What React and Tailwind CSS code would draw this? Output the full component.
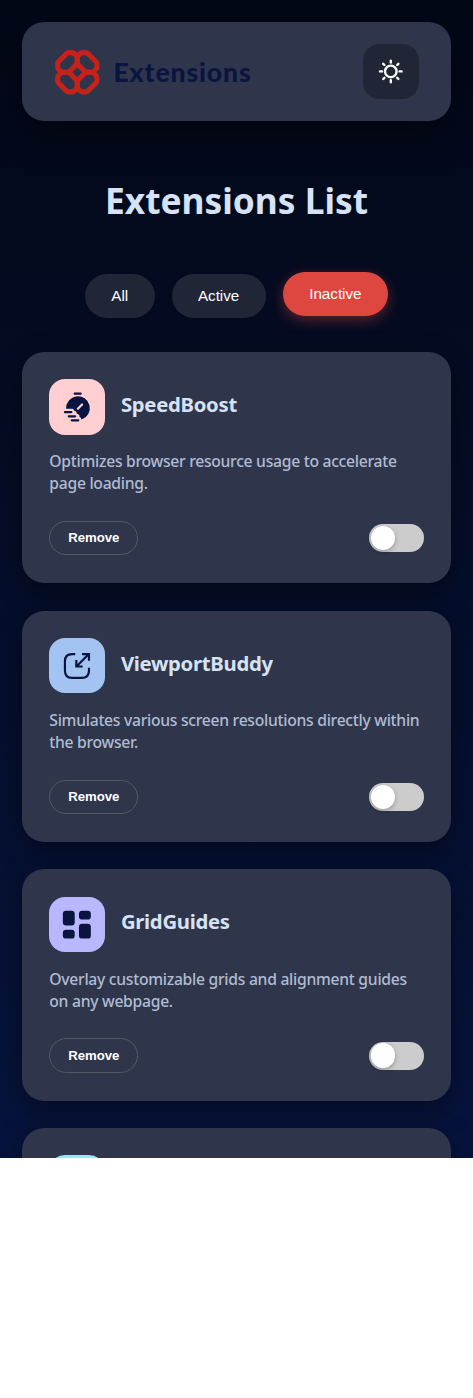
import React from "react";

function Logo() {
  const petal = "M13.6 2.6h3.2c1 0 1.6.3 2.3 1l1.9 1.9c.7.7 1 1.2 1 2.2V13.6L13.6 22H7.7c-1 0-1.5-.3-2.2-1l-1.9-1.9c-.7-.7-1-1.3-1-2.3v-3.2c0-1 .3-1.6 1-2.3l7.7-7.7c.7-.7 1.3-1 2.3-1z";
  return (
    <svg className="mt-px h-[44.5px] w-[44.5px] shrink-0 overflow-visible" viewBox="0 0 44 44" fill="none" stroke="#c7221a" strokeWidth="5" strokeLinejoin="round">
      <path d={petal} />
      <path d={petal} transform="rotate(90 22 22)" />
      <path d={petal} transform="rotate(180 22 22)" />
      <path d={petal} transform="rotate(270 22 22)" />
    </svg>
  );
}

function Sun() {
  return (
    <svg className="size-[26px]" viewBox="0 0 26 26" fill="none" stroke="#fbfdfe" strokeWidth="2.4" strokeLinecap="round">
      <circle cx="12.8" cy="12.4" r="5.8" />
      <path d="M12.8 1.6v2M12.8 21.2v2M2 12.4h2M21.6 12.4h2M5.2 4.8l1.2 1.2M19.2 18.8l1.2 1.2M5.2 20l1.2-1.2M19.2 6l1.2-1.2" />
    </svg>
  );
}

function SpeedIcon() {
  return (
    <svg className="size-full" viewBox="0 0 56 56" fill="none" strokeLinecap="round">
      <path fill="#091540" d="M17.3 30.2A12 12 0 1 1 33 40.9c-.6-.8-.9-2.4-2.2-2.8.2-1.6-.8-2.7-2.6-2.9-.1-2.2-1.3-3-2.8-3.2-.2-1.3-1.2-1.8-2.5-1.8z" />
      <path stroke="#091540" strokeWidth="2.3" d="M26 14.8h6M16.2 33.6h6.4M20 37.7h6.4M23 41.8h6.6" />
      <path stroke="#ffcfd2" strokeWidth="2.2" d="m29.2 30 4.2-4.2" />
    </svg>
  );
}

function ViewportIcon() {
  return (
    <svg className="size-full" viewBox="0 0 56 56" fill="none" stroke="#091540" strokeWidth="2.2">
      <path d="M26.5 16.3h-3.2c-4.6 0-7.2 2.6-7.2 7.2v9.7c0 4.6 2.6 7.2 7.2 7.2h9.9c4.6 0 7.2-2.6 7.2-7.2V30" />
      <path d="M27.6 22.3v6.5H34M28 28.5l12-12M33.4 16.3h7V23" />
    </svg>
  );
}

function GridIcon() {
  return (
    <svg className="size-full" viewBox="0 0 56 56" fill="#091540">
      <rect x="14" y="13.8" width="12" height="14.9" rx="3.2" />
      <rect x="30.3" y="13.8" width="12" height="9" rx="3.2" />
      <rect x="14" y="33" width="12" height="9" rx="3.2" />
      <rect x="30.3" y="27.1" width="12" height="14.9" rx="3.2" />
    </svg>
  );
}

const extensions = [
  { name: "SpeedBoost", text: "Optimizes browser resource usage to accelerate page loading.", tile: "bg-[#ffcfd2]", Icon: SpeedIcon },
  { name: "ViewportBuddy", text: "Simulates various screen resolutions directly within the browser.", tile: "bg-[#a3c4f3]", Icon: ViewportIcon },
  { name: "GridGuides", text: "Overlay customizable grids and alignment guides on any webpage.", tile: "bg-[#b9b8ff]", Icon: GridIcon },
];

const cardClass = "w-full shrink-0 rounded-[22.2px] bg-[#2f364b] px-[27.3px] pt-[27.4px] shadow-[0_9px_28px_rgba(0,0,0,0.4)]";

function Card({ item }) {
  const { Icon } = item;
  return (
    <article className={cardClass + " h-[231.4px]"}>
      <div className="flex items-center gap-[16.2px]">
        <div className={"size-[55.4px] shrink-0 overflow-hidden rounded-[16px] " + item.tile}>
          <Icon />
        </div>
        <h2 className="pb-[6px] text-[20.3px] leading-7 font-bold tracking-[-0.28px] text-[#d6e2f5]">{item.name}</h2>
      </div>
      <p className="mt-[15.4px] text-[15.7px] leading-[22.15px] font-medium tracking-[-0.28px] text-[#afbbd2]">{item.text}</p>
      <div className="mt-[26.5px] flex items-center justify-between">
        <button className="h-[34.5px] w-[89px] rounded-full border border-[#535868] font-['Liberation_Sans',Arial,sans-serif] text-[13.2px] font-bold text-white">Remove</button>
        <button aria-label={item.name} className="flex h-[28px] w-[55px] items-center rounded-full bg-[#ccc] pl-[2.4px]">
          <span className="size-[24.4px] rounded-full bg-white shadow-[0_2px_5px_rgba(0,0,0,0.25)]" />
        </button>
      </div>
    </article>
  );
}

export default function App() {
  return (
    <div className="min-h-[1398px] bg-white font-['Noto_Sans',sans-serif]">
      <div className="flex h-[1158px] w-full flex-col overflow-hidden bg-linear-to-b from-[#030817] to-[#07133d] px-[22px] pt-[22px]">
        <header className="flex h-[99.4px] shrink-0 items-center justify-between rounded-[22.2px] bg-[#2f364b] pr-[32.4px] pl-[33px] shadow-[0_9px_37px_rgba(0,0,0,0.5)]">
          <div className="flex items-center gap-[14px]">
            <Logo />
            <span className="font-[Lato,sans-serif] text-[26.5px] leading-8 font-black tracking-[0.9px] text-[#091540]">Extensions</span>
          </div>
          <button aria-label="Theme" className="flex size-[55.4px] items-center justify-center rounded-[16.5px] bg-[#212636]">
            <Sun />
          </button>
        </header>
        <h1 className="mt-[54px] shrink-0 text-center text-[35.3px] leading-[50px] font-bold text-[#d6e2f5]">Extensions List</h1>
        <nav className="mt-[48.4px] flex shrink-0 justify-center gap-[17px] font-['Liberation_Sans',Arial,sans-serif] text-[15.2px] text-white">
          <button className="h-[44.5px] w-[69.7px] rounded-full bg-[#212636]">All</button>
          <button className="h-[44.5px] w-[94px] rounded-full bg-[#212636]">Active</button>
          <button className="h-[44.5px] w-[105.5px] -translate-y-[2px] rounded-full bg-[#de473f] shadow-[0_4px_14px_rgba(222,71,63,0.4)]">Inactive</button>
        </nav>
        <main className="mt-[33.7px] flex flex-col gap-[27.3px]">
          {extensions.map((item) => (
            <Card key={item.name} item={item} />
          ))}
          <article className={cardClass + " h-[60px]"}>
            <div className="size-[55.4px] rounded-[16px] bg-[#8eecf5]" />
          </article>
        </main>
      </div>
    </div>
  );
}
